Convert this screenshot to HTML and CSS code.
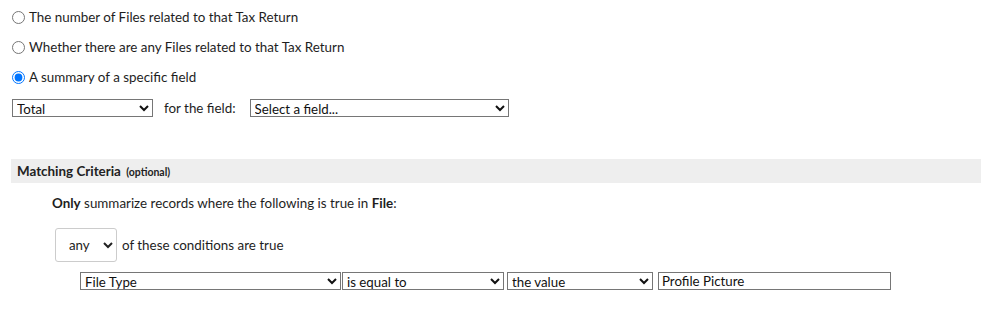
FILE: index.html
```html
<!DOCTYPE html>
<html>
<head>
<title>Summary Field</title>
<meta name="viewport" content="width=device-width, initial-scale=1">
<link rel="stylesheet" href="styles.css">
</head>
<body>

<div class="options">
  <label class="option"><input type="radio" name="mode"> The number of Files related to that Tax Return</label>
  <label class="option"><input type="radio" name="mode"> Whether there are any Files related to that Tax Return</label>
  <label class="option"><input type="radio" name="mode" checked> A summary of a specific field</label>
</div>

<div class="summary-row">
  <select class="sel sel-agg"><option>Total</option></select>
  <span class="for-field">for the field:</span>
  <select class="sel sel-field"><option>Select a field...</option></select>
</div>

<div class="section-head">Matching Criteria <small>(optional)</small></div>

<div class="criteria">
  <p class="criteria-intro"><b>Only</b> summarize records where the following is true in <b>File</b>:</p>

  <div class="match-row">
    <select class="any-sel"><option>any</option></select>
    <span>of these conditions are true</span>
  </div>

  <div class="condition">
    <select class="sel sel-col"><option>File Type</option></select>
    <select class="sel sel-op"><option>is equal to</option></select>
    <select class="sel sel-kind"><option>the value</option></select>
    <input class="val" type="text" value="Profile Picture">
  </div>
</div>

</body>
</html>
```

FILE: styles.css
```css
body {
  margin: 0;
  padding: 0 0 0 11px;
  font-family: Lato, "Noto Sans", sans-serif;
  font-size: 13.4px;
  color: #1e1e1e;
  background: #fff;
}

.options {
  padding-top: 2px;
}

.option {
  display: flex;
  align-items: center;
  height: 30px;
}

.option input {
  margin: 0 4px 0 1px;
  width: 13px;
  height: 13px;
}

.sel {
  font-family: Lato, "Noto Sans", sans-serif;
  font-size: 13.3px;
  color: #111;
  height: 18px;
  padding: 0;
  border: 1px solid #767676;
  border-radius: 0;
  background: #fff;
}

.summary-row {
  display: flex;
  align-items: center;
  margin-top: 7px;
}

.sel-agg {
  margin-left: 1px;
  width: 141px;
}

.for-field {
  margin: 0 14px 0 11px;
}

.sel-field {
  width: 259px;
}

.section-head {
  margin-top: 42px;
  background: #eee;
  height: 24px;
  line-height: 24px;
  padding-left: 6px;
  font-weight: bold;
  font-size: 13.4px;
  color: #222;

  & small {
    font-size: 10.5px;
    margin-left: 2px;
  }
}

.criteria {
  padding-left: 41px;
}

.criteria-intro {
  margin: 12px 0 0;
  line-height: 16px;
}

.match-row {
  display: flex;
  align-items: center;
  margin-top: 17px;
  margin-left: 3px;
}

.any-sel {
  font-family: Lato, "Noto Sans", sans-serif;
  font-size: 13.3px;
  color: #222;
  width: 62px;
  height: 34px;
  padding-left: 9px;
  border: 1px solid #ccc;
  border-radius: 3px;
  background: #fff;
  margin-right: 5px;
}

.condition {
  display: flex;
  align-items: center;
  gap: 1px;
  margin-top: 10px;
  margin-left: 28px;
}

.sel-col {
  width: 261px;
}

.sel-op {
  width: 162px;
}

.sel-kind {
  width: 146px;
  margin-left: 2px;
}

.val {
  font-family: Lato, "Noto Sans", sans-serif;
  font-size: 13.3px;
  color: #111;
  width: 233px;
  height: 18px;
  box-sizing: border-box;
  padding: 0 3px;
  border: 1px solid #767676;
  margin-left: 4px;
}
```
